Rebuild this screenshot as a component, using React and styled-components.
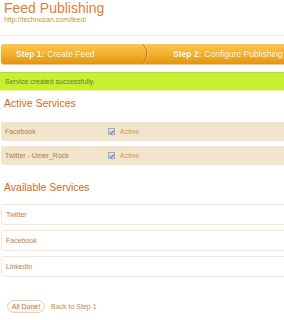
import React from 'react';
import styled, { createGlobalStyle } from 'styled-components';

const GlobalStyle = createGlobalStyle`
  *, *::before, *::after {
    box-sizing: border-box;
  }
  html, body {
    margin: 0;
    padding: 0;
    background: #fff;
    overflow: hidden;
  }
  body {
    font-family: "Liberation Sans", Arial, sans-serif;
  }
`;

const Page = styled.div`
  width: 284px;
  height: 320px;
  overflow: hidden;
`;

const Header = styled.div`
  padding: 0 0 0 4px;
  height: 36px;
  border-bottom: 1px solid #fdf0dc;
`;

const Title = styled.h1`
  margin: 0;
  font-size: 14px;
  font-weight: normal;
  line-height: 16px;
  color: #e67c34;
`;

const Url = styled.div`
  font-size: 7px;
  line-height: 8px;
  color: #c8962e;
`;

const Steps = styled.div`
  display: flex;
  align-items: center;
  margin: 8px 0 0 1px;
  width: 300px;
  height: 20px;
  border-radius: 3px 0 0 3px;
  background: linear-gradient(#fbc84c, #f2ae2c 55%, #e09512);
  box-shadow: 0 1px 1px rgba(150, 90, 0, 0.35);
`;

const Step = styled.div`
  display: flex;
  align-items: center;
  padding-left: ${p => p.$pad}px;
  width: ${p => p.$width}px;
  flex: none;
  font-size: 8.5px;
  color: #fff;
  white-space: nowrap;
  text-shadow: 0 0 1px rgba(180, 100, 0, 0.4);

  b {
    margin-right: 3px;
  }
`;

const Divider = styled.svg`
  width: 6px;
  height: 20px;
  flex: none;
`;

const Notice = styled.div`
  margin-top: 8px;
  height: 19px;
  display: flex;
  align-items: center;
  padding-left: 5px;
  background: #c8f032;
  border-top: 1px solid #b4dc28;
  border-bottom: 1px solid #e2f8a8;
  font-size: 7px;
  color: #667a2c;
`;

const SectionTitle = styled.h2`
  margin: ${p => p.$top}px 0 0 4px;
  font-size: 10.5px;
  font-weight: normal;
  line-height: 12px;
  color: #cf6b16;
`;

const List = styled.div`
  display: flex;
  flex-direction: column;
  gap: ${p => p.$gap}px;
  margin-top: ${p => p.$top}px;
  padding-left: 1px;
`;

const ActiveRow = styled.div`
  display: flex;
  align-items: center;
  height: 19px;
  width: 300px;
  padding-left: 4px;
  background: #f2e4cd;
  border-radius: 2px;
  font-size: 7px;
  color: #b47846;
`;

const Name = styled.span`
  width: 103px;
`;

const Check = styled.span`
  width: 7px;
  height: 7px;
  margin-right: 5px;
  border: 1px solid #9aa8c0;
  background: linear-gradient(#e4e8f0, #c8d0de);
  display: flex;
  align-items: center;
  justify-content: center;
`;

const Status = styled.span`
  color: #d49a50;
`;

const ServiceRow = styled.div`
  display: flex;
  align-items: center;
  height: 21px;
  width: 300px;
  padding-left: 4px;
  border: 1px solid #f6e6d2;
  border-radius: 3px;
  background: #fff;
  font-size: 7px;
  color: #c07c3e;
`;

const Actions = styled.div`
  display: flex;
  align-items: center;
  margin: 23px 0 0 7px;
  font-size: 7px;
  color: #c88a48;
`;

const DoneButton = styled.button`
  height: 13px;
  width: 38px;
  padding: 0;
  margin-right: 6px;
  border: 1px solid #f0cfa8;
  border-radius: 7px;
  background: linear-gradient(#fff, #fbf3ea);
  font-family: inherit;
  font-size: 7px;
  color: #b27a46;
`;

const active = ['Facebook', 'Twitter - Umer_Rock'];
const available = ['Twitter', 'Facebook', 'Linkedin'];

export default function App() {
  return (
    <Page>
      <GlobalStyle />
      <Header>
        <Title>Feed Publishing</Title>
        <Url>http://technozan.com/feed/</Url>
      </Header>

      <Steps>
        <Step $pad={15} $width={142}>
          <b>Step 1:</b> Create Feed
        </Step>
        <Divider viewBox="0 0 6 20">
          <path d="M0 0 L4 7 L3 15 L0.5 20" fill="none" stroke="#b86e0c" strokeWidth="0.9" />
          <path d="M1 0 L5 7 L4 15 L1.5 20" fill="none" stroke="#fcd070" strokeWidth="0.7" />
        </Divider>
        <Step $pad={24} $width={150}>
          <b>Step 2:</b> Configure Publishing
        </Step>
      </Steps>

      <Notice>Service created successfully.</Notice>

      <SectionTitle $top={6}>Active Services</SectionTitle>
      <List $gap={5} $top={13}>
        {active.map(name => (
          <ActiveRow key={name}>
            <Name>{name}</Name>
            <Check>
              <svg width="4" height="4" viewBox="0 0 4 4">
                <path d="M0.5 2.5 L1.5 3.5 L3.5 0.5" fill="none" stroke="#2a3c70" strokeWidth="0.9" />
              </svg>
            </Check>
            <Status>Active</Status>
          </ActiveRow>
        ))}
      </List>

      <SectionTitle $top={16}>Available Services</SectionTitle>
      <List $gap={5} $top={11}>
        {available.map(name => (
          <ServiceRow key={name}>{name}</ServiceRow>
        ))}
      </List>

      <Actions>
        <DoneButton>All Done!</DoneButton>
        Back to Step 1
      </Actions>
    </Page>
  );
}
